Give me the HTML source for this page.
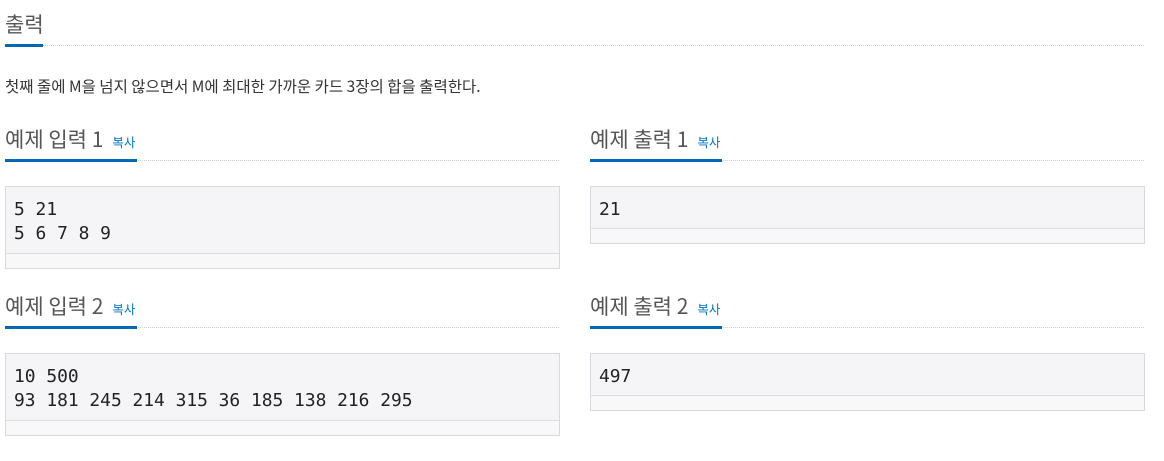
<!DOCTYPE html>
<html><head><meta charset="utf-8"><style>
body{margin:0;background:#fff;width:1164px;height:461px;position:relative;overflow:hidden;font-family:"Noto Sans CJK KR","Liberation Sans",sans-serif;color:#333}
.a{position:absolute}
.h{font-size:21px;color:#555;white-space:nowrap;line-height:24px}
.h small{font-size:12.5px;color:#0076c0;margin-left:9px}
.dot{position:absolute;height:0;border-top:1px dotted #ccd}
.bl{position:absolute;height:3px;background:#0068b5}
.box{position:absolute;border:1px solid #d8d8e0;background:#f5f5f7;box-sizing:border-box}
.box pre{margin:0;padding:11px 0 0 8px;font-family:"DejaVu Sans Mono","Liberation Mono",monospace;font-size:17.9px;line-height:24px;color:#222}
.box .s{position:absolute;left:0;right:0;bottom:0;height:14px;border-top:1px solid #ddd;background:#f8f8f8}
</style></head><body>
<div class="a h" style="left:5px;top:12px">출력</div>
<div class="dot" style="left:5px;right:20px;top:45px"></div>
<div class="bl" style="left:5px;width:38px;top:44px"></div>
<div class="a" style="left:5px;top:76px;font-size:15.5px;line-height:20px;color:#333;white-space:nowrap">첫째 줄에 M을 넘지 않으면서 M에 최대한 가까운 카드 3장의 합을 출력한다.</div>

<div class="a h" style="left:5px;top:127px">예제 입력 1<small>복사</small></div>
<div class="dot" style="left:5px;width:554px;top:160px"></div>
<div class="bl" style="left:5px;width:132px;top:159px"></div>
<div class="box" style="left:5px;top:186px;width:555px;height:83px"><pre>5 21
5 6 7 8 9</pre><div class="s"></div></div>

<div class="a h" style="left:590px;top:127px">예제 출력 1<small>복사</small></div>
<div class="dot" style="left:590px;width:554px;top:160px"></div>
<div class="bl" style="left:590px;width:132px;top:159px"></div>
<div class="box" style="left:590px;top:186px;width:555px;height:58px"><pre>21</pre><div class="s"></div></div>

<div class="a h" style="left:5px;top:294px">예제 입력 2<small>복사</small></div>
<div class="dot" style="left:5px;width:554px;top:327px"></div>
<div class="bl" style="left:5px;width:132px;top:326px"></div>
<div class="box" style="left:5px;top:353px;width:555px;height:83px"><pre>10 500
93 181 245 214 315 36 185 138 216 295</pre><div class="s"></div></div>

<div class="a h" style="left:590px;top:294px">예제 출력 2<small>복사</small></div>
<div class="dot" style="left:590px;width:554px;top:327px"></div>
<div class="bl" style="left:590px;width:132px;top:326px"></div>
<div class="box" style="left:590px;top:353px;width:555px;height:58px"><pre>497</pre><div class="s"></div></div>
</body></html>
